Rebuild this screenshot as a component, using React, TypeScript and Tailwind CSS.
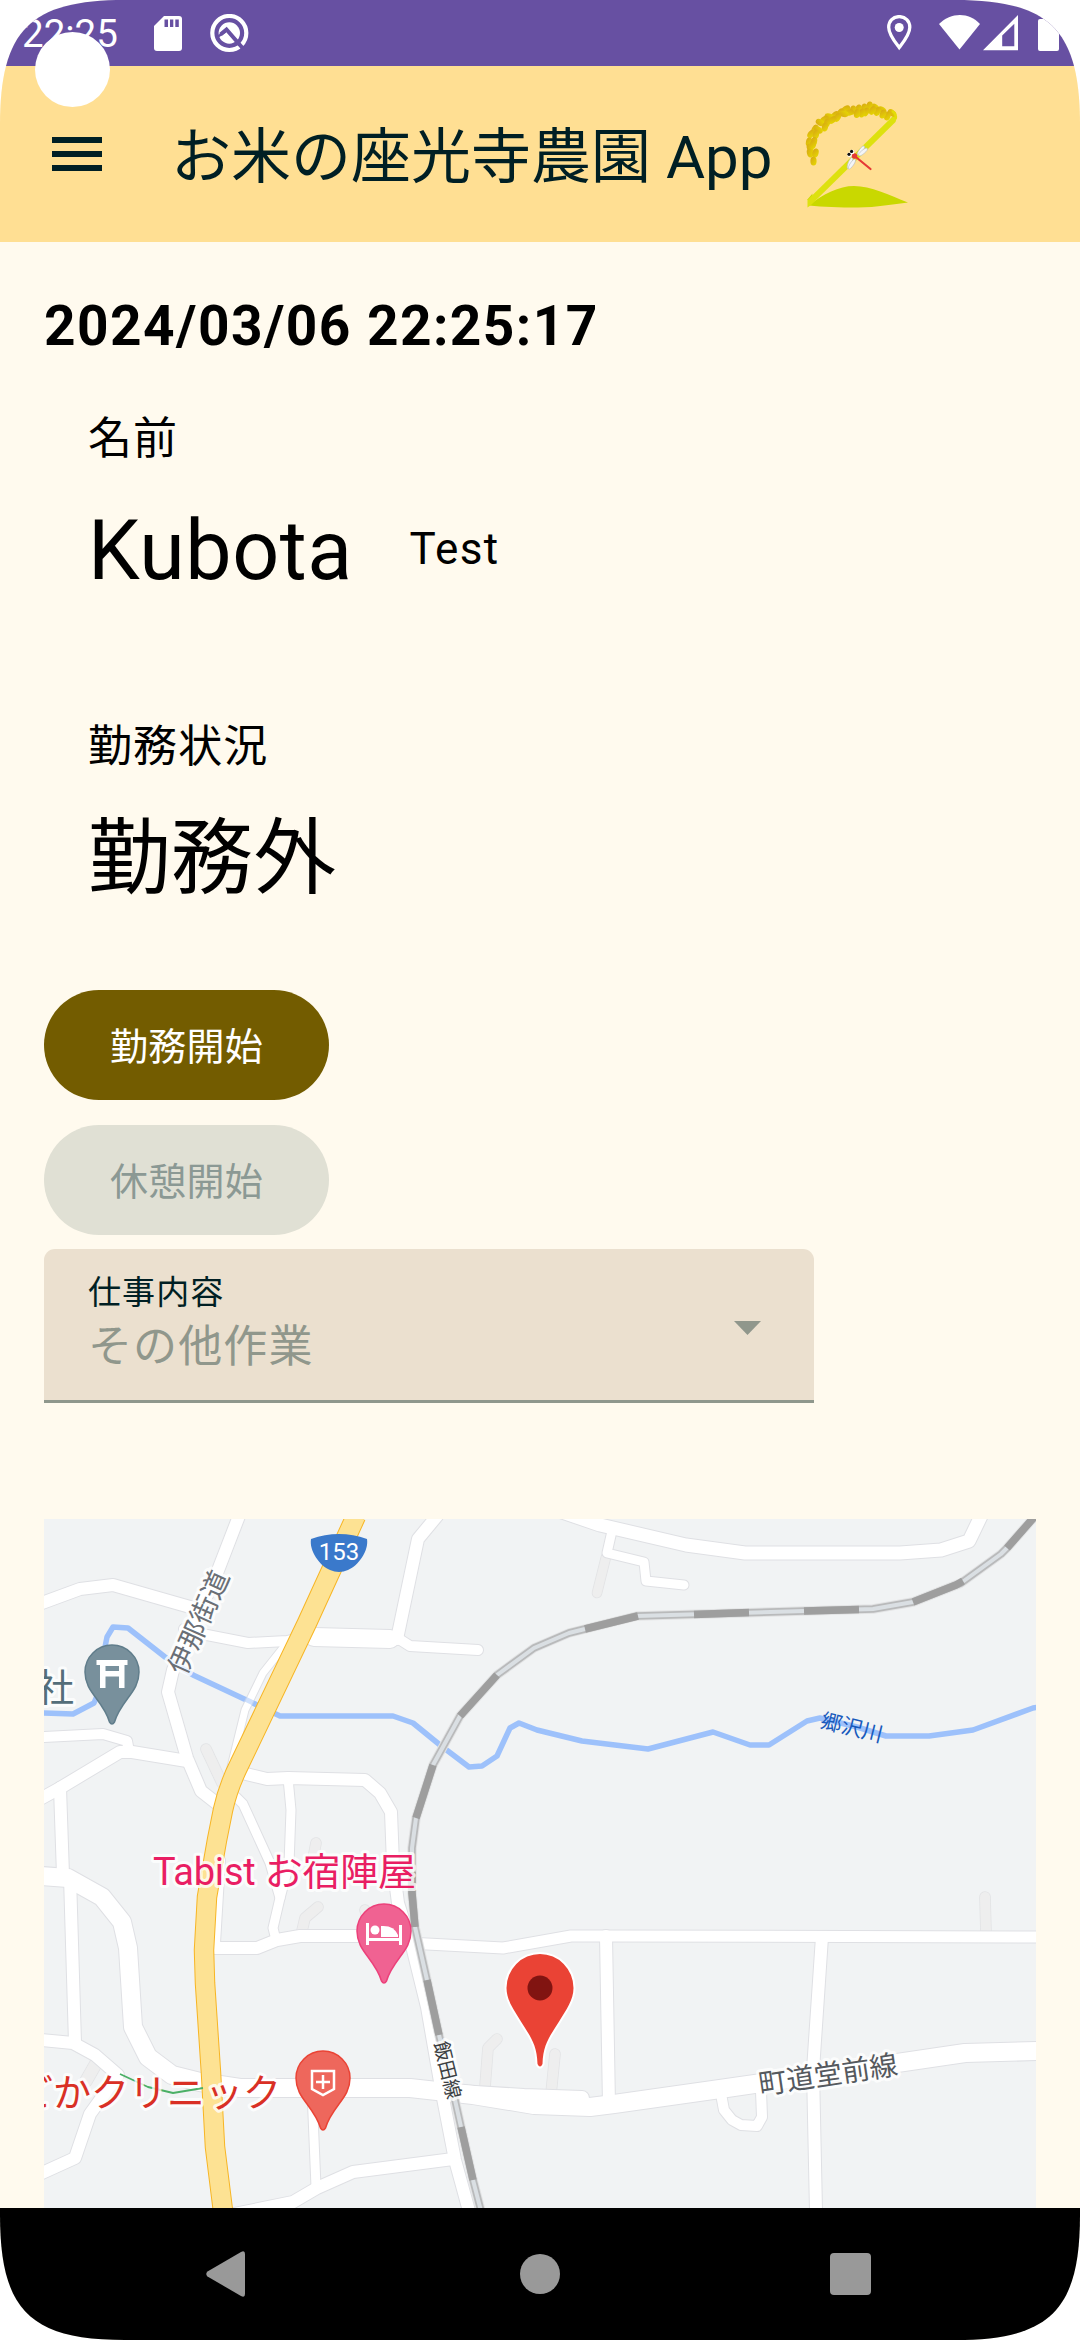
import React from "react";

const FONT = "font-['Roboto','Noto_Sans_CJK_JP',sans-serif]";

function StatusBar() {
  return (
    <div className="flex h-[66px] shrink-0 items-start bg-[#6750a2] text-white">
      <span className="ml-[22px] mt-[13px] w-[98px] text-[38.5px] leading-[42px]">22:25</span>
      <svg className="ml-[34px] mt-4 h-[35px] w-[28px]" viewBox="0 0 28 35">
        <path d="M10 0H25a3 3 0 0 1 3 3V32a3 3 0 0 1-3 3H3a3 3 0 0 1-3-3V10Z" fill="#fff" />
        <path d="M10.500 3.500h3.500v7.500h-3.500zM16 3.500h3.300v7.500H16zM21.300 3.500h3.500v7.500h-3.500z" fill="#6750a2" />
      </svg>
      <svg className="ml-[28px] mt-[14px] h-[39px] w-[39px]" viewBox="0 0 39 39">
        <circle cx="19.300" cy="19" r="17" fill="none" stroke="#fff" strokeWidth="4.200" />
        <circle cx="19.300" cy="19" r="10.700" fill="#fff" />
        <path d="M10.500 20.500L16.500 15.500L33 34.500" fill="none" stroke="#6750a2" strokeWidth="4" />
        <path d="M8 22.500L15.500 17.500" fill="none" stroke="#6750a2" strokeWidth="2.500" />
      </svg>
      <svg className="ml-auto mt-[15px] h-9 w-[25px]" viewBox="0 0 25 36">
        <path d="M12.200 1.600C6 1.600 1.700 6.200 1.700 12.200C1.700 19.500 8 27 12.200 32.500C16.500 27 22.800 19.500 22.800 12.200C22.800 6.200 18.400 1.600 12.200 1.600Z" fill="none" stroke="#fff" strokeWidth="3.300" />
        <circle cx="12.200" cy="12.500" r="4.500" fill="#fff" />
      </svg>
      <svg className="ml-[27px] mt-[15px] h-[35px] w-[42px]" viewBox="0 0 42 35">
        <path d="M0 9C12-3 30-3 41 9L20.500 34.500Z" fill="#fff" />
      </svg>
      <svg className="ml-0.5 mt-[15px] h-9 w-9" viewBox="0 0 36 36">
        <path fillRule="evenodd" d="M0 35.200L35 0V35.200ZM19.200 20.500V31.200H31.300V8.700Z" fill="#fff" />
      </svg>
      <svg className="ml-[19px] mr-[9px] mt-[15px] h-9 w-[33px]" viewBox="0 0 33 36">
        <path d="M0 6a2 2 0 0 1 2-2H21V34a2 2 0 0 1-2 2H2a2 2 0 0 1-2-2Z" fill="#fff" />
      </svg>
    </div>
  );
}

const GRAINS: [number, number, number][] = [
  [91, 17, -55], [86.500, 20, 20], [81, 14, -60], [82, 18, 25], [74.500, 11.500, -50], [76.500, 15.500, 25], [68.500, 10, 10],
  [71.500, 14.500, 30], [63, 12, 20], [65, 16, 30], [57.500, 13, 15], [61, 17, 15], [52, 14, 10], [56, 17.500, 10],
  [45, 13, 60], [48.500, 16.500, 75], [39.500, 16.500, 40], [43, 18, -80], [34, 19, 50], [36.500, 21.500, 30], [28, 20.500, -80],
  [31.500, 24, 50], [23.500, 23.500, 60], [26, 27, 20], [19, 26.500, -60], [24, 31, 15], [14, 33, 30], [17.500, 34, -60],
  [10, 38, 35], [15, 38.500, 15], [8, 46, 10], [13, 45.500, 15], [9, 52, -20], [12, 48.500, 15], [9, 57, -15],
  [14.500, 57, 15], [12.500, 65, 0],
];

function RiceLogo() {
  return (
    <svg className="ml-[29px] h-[116px] w-[112px]" viewBox="0 0 112 116">
      <defs>
        <linearGradient id="grain" x1="0" y1="0" x2="1" y2="1">
          <stop offset="0" stopColor="#d6a514" />
          <stop offset="1" stopColor="#e8dc00" />
        </linearGradient>
      </defs>
      <path d="M8 109.500C22 98 38 90 53 90C70 90 88 99 107 106.500C92 108 76 111.500 57 111.500C38 111.500 22 111 8 109.500Z" fill="#c9d800" />
      <path d="M6 104L11.500 97.500L11 104Z" fill="#c9d800" />
      <path d="M93 19L96 21L94.500 26L10 109L6.500 111.500V104Z" fill="#dde10f" />
      {GRAINS.map(([x, y, a], i) => (
        <ellipse key={i} cx={x} cy={y} rx="3.100" ry="4.600" transform={`rotate(${a} ${x} ${y})`} fill="url(#grain)" />
      ))}
      <path d="M91 15Q96 18 94.500 23" fill="none" stroke="#e3dc08" strokeWidth="2.500" />
      <g fill="#f4f5f6" stroke="#b9bdc2" strokeWidth="0.600">
        <ellipse cx="60" cy="54.500" rx="1.800" ry="5.500" transform="rotate(36 60 54.500)" />
        <ellipse cx="62" cy="56" rx="1.800" ry="5.500" transform="rotate(50 62 56)" />
        <ellipse cx="49" cy="67" rx="1.800" ry="6" transform="rotate(22 49 67)" />
        <ellipse cx="51" cy="68" rx="1.800" ry="6" transform="rotate(34 51 68)" />
      </g>
      <path d="M53 59.500L69.500 73" stroke="#e53935" strokeWidth="2.200" strokeLinecap="round" />
      <circle cx="53.500" cy="60" r="2.700" fill="#e53935" />
      <circle cx="51" cy="56" r="2.300" fill="#fff" />
      <circle cx="48.500" cy="58.800" r="2.300" fill="#fff" />
      <circle cx="50.600" cy="55.400" r="1.600" fill="#111" />
      <circle cx="48" cy="58.300" r="1.600" fill="#111" />
    </svg>
  );
}

function AppBar() {
  return (
    <header className="flex h-[176px] shrink-0 items-center bg-[#ffdf93] text-[#001f24]">
      <svg className="ml-[52px] h-[34px] w-[50px]" viewBox="0 0 50 34">
        <path d="M0 0H50V6H0ZM0 14H50V20H0ZM0 28H50V34H0Z" fill="#001f24" />
      </svg>
      <h1 className="ml-[69px] mt-[7px] whitespace-nowrap text-[60px] leading-[80px]">お米の座光寺農園 App</h1>
      <RiceLogo />
    </header>
  );
}

type Road = { d: string; w: number };

const LANES: Road[] = [
  { d: "M162 230L178 264", w: 10 },
  { d: "M562 38L553 74", w: 9 },
  { d: "M272 324L268 345", w: 10 },
  { d: "M274 388L261 399L258 412", w: 10 },
  { d: "M321 391L324 400", w: 10 },
  { d: "M54 541L42 562", w: 12 },
  { d: "M453 520L444 529L441 568", w: 10 },
  { d: "M511 535L507 575", w: 10 },
  { d: "M941 378L942 414", w: 10 },
];

const ROADS: Road[] = [
  { d: "M195 -3L173 54L129 151L124 173L143 239L157 272L180 290", w: 12 },
  { d: "M-2 84L36 70L69 66L160 92", w: 12 },
  { d: "M140 110L163 116L204 124L243 122L273 118", w: 10 },
  { d: "M270 118L346 120", w: 18 },
  { d: "M340 120L355 120L366 127L434 131", w: 10 },
  { d: "M393 -3L374 20L353 120", w: 12 },
  { d: "M515 -8L556 6L642 26L701 34L856 34L897 31L925 22L938 -5", w: 13 },
  { d: "M568 12L563 34L600 43L602 62L640 66", w: 9 },
  { d: "M246 120L219 154L201 191L185 256", w: 7 },
  { d: "M202 255L223 260L244 259L321 261L336 274L347 293L349 345L354 384L369 431L383 488L398 574L411 641L425 692", w: 12 },
  { d: "M244 259L247 291L245 345L236 379", w: 9 },
  { d: "M192 278L199 285L226 344L236 379L229 409L232 421", w: 9 },
  { d: "M177 341L172 424", w: 8 },
  { d: "M171 429L213 429L233 421L256 417L363 417", w: 12 },
  { d: "M364 424L459 429L527 417L559 417L995 418", w: 11 },
  { d: "M562 417L565 586", w: 12 },
  { d: "M778 418L769 551L772 692", w: 12 },
  { d: "M-2 218L59 215L83 222L85 233", w: 10 },
  { d: "M-2 279L16 269L76 233L88 233L143 242", w: 12 },
  { d: "M16 269L19 356L26 358L31 524", w: 12 },
  { d: "M-2 521L29 524L51 536L74 556L46 595L31 639L-2 654", w: 12 },
  { d: "M-2 357L24 359L58 378L78 403L84 429L89 508L104 538L128 556L156 563L196 569L366 569L429 576L490 586L546 588L570 585L676 570L921 534L995 532", w: 18 },
  { d: "M415 573L480 577L538 579", w: 14 },
  { d: "M268 572L272 668", w: 9 },
  { d: "M190 695L249 683L273 669L309 653L409 640", w: 12 },
  { d: "M677 575L680 591L688 601L697 606L713 607L718 598L717 572", w: 10 },
];

const RIVER =
  "M-2 194L29 195L50 184L58 165L61 128L63 118L69 108L84 109L121 138L149 156L213 186L236 197L349 197L369 204L396 226L425 248L438 247L453 237L466 209L475 204L493 211L538 222L604 230L669 213L706 226L725 226L763 202L776 199L813 208L842 217L885 217L929 211L989 189L995 188";

const RAIL =
  "M992 -4L963 29L957 35L917 64L869 83L829 90L593 97L525 114L490 129L453 156L416 197L389 246L372 299L368 329L368 374L371 408L383 461L395 516L411 581L417 608L429 661L437 692";

const RAIL_DARK =
  "M992 -4L963 29M919 62L912 66L869 83M815 90.500L760 92M705 93.500L650 95.500M594 97L541 110M453 156L416 197M389 246L372 299M368 353L368 374L371 408M383 461L395 516M417 608L429 661";

const HIGHWAY = "M312 -3L263 104L196 244Q184 268 179 291L173 321L163 378L160 431L161 464L167 554L171 628L179 692";

const PIN =
  "M-27 0A27 27 0 0 1 27 0C27 11 22 18 16 26C10 34 5 41 2.500 50Q0 54-2.500 50C-5 41-10 34-16 26C-22 18-27 11-27 0Z";

function MapLabel(props: React.SVGProps<SVGTextElement>) {
  return <text stroke="#ffffff" strokeOpacity="0.800" strokeWidth="6" strokeLinejoin="round" className="[paint-order:stroke]" {...props} />;
}

function FarmMap() {
  return (
    <svg className="mt-[116px] block h-[689px] w-[992px] shrink-0" viewBox="0 0 992 689">
      <rect width="992" height="689" fill="#f1f3f4" />
      <g fill="none" strokeLinejoin="round">
        {LANES.map((r) => (
          <g key={r.d} strokeLinecap="round">
            <path d={r.d} stroke="#e2e3e5" strokeWidth={r.w + 1.6} />
            <path d={r.d} stroke="#eeeeee" strokeWidth={r.w} />
          </g>
        ))}
        <path d={RIVER} stroke="#9dc1fb" strokeWidth="5.500" />
        {ROADS.map((r) => (
          <path key={r.d} d={r.d} stroke="#dfe0e4" strokeWidth={r.w + 2} strokeLinecap="round" />
        ))}
        {ROADS.map((r) => (
          <path key={r.d} d={r.d} stroke="#ffffff" strokeWidth={r.w} strokeLinecap="round" />
        ))}
        <path d="M121 138L149 156M201 180L222 190" stroke="#9dc1fb" strokeWidth="5" opacity="0.500" />
        <path d={HIGHWAY} stroke="#f7b524" strokeWidth="20.500" />
        <path d={HIGHWAY} stroke="#fde293" strokeWidth="18.500" />
        <path d="M76 555L104 568L129 574L159 569" stroke="#4bb066" strokeWidth="1.800" />
        <path d={RAIL} stroke="#e2e3e4" strokeWidth="9.500" />
        <path d={RAIL} stroke="#b9babb" strokeWidth="7.500" />
        <path d={RAIL} stroke="#dadfe3" strokeWidth="4" />
        <path d={RAIL_DARK} stroke="#9e9e9e" strokeWidth="7.500" />
      </g>

      <path d="M267 20Q295 10 323 20C325 32 314 47 304 51Q295 55 286 51C276 47 265 32 267 20Z" fill="#3a79cb" />
      <text x="295" y="41" textAnchor="middle" fontSize="24" fill="#fff">153</text>

      <MapLabel transform="translate(154 103) rotate(-66)" y="10.500" textAnchor="middle" fontSize="27.500" fill="#6a6f76">伊那街道</MapLabel>
      <text transform="translate(808 208) rotate(14)" y="8" textAnchor="middle" fontSize="21" fill="#185abc">郷沢川</text>
      <MapLabel transform="translate(404 551) rotate(76)" y="7.500" textAnchor="middle" fontSize="19.500" fill="#3c4043">飯田線</MapLabel>
      <MapLabel transform="translate(784 555) rotate(-8.500)" y="10.500" textAnchor="middle" fontSize="28" fill="#55595e">町道堂前線</MapLabel>
      <MapLabel x="30" y="182" textAnchor="end" fontSize="38" fill="#546e7a">社</MapLabel>
      <MapLabel x="109" y="366" textLength="263" fontSize="38" fill="#e91e63">Tabist お宿陣屋</MapLabel>
      <MapLabel x="237" y="587" textAnchor="end" fontSize="38" fill="#d93025">どかクリニック</MapLabel>

      <g transform="translate(68 153)">
        <path d={PIN} fill="#78909c" stroke="#607d8b" strokeWidth="1.500" />
        <path d="M-15.500 -12H15.500V-7H12.500V16H7V4.500H-6.500V16H-12V-7H-15.500ZM-6.500 -6V-1H7V-6Z" fill="#fff" fillRule="evenodd" />
      </g>
      <g transform="translate(340 412)">
        <path d={PIN} fill="#f06292" stroke="#ec407a" strokeWidth="1.500" />
        <path d="M-18 -8H-15V7H15V-6H18V14H15V10H-15V14H-18Z" fill="#fff" />
        <circle cx="-9" cy="-1" r="4.500" fill="#fff" />
        <path d="M-3 6V-5Q10 -6 14 4V6Z" fill="#fff" />
      </g>
      <g transform="translate(279 559)">
        <path d={PIN} fill="#ee675c" stroke="#ea4335" strokeWidth="1.500" />
        <path d="M-11 -7H11V11L0 17L-11 11Z" fill="none" stroke="#fff" strokeWidth="2.500" />
        <path d="M0 -3V11M-7 4H7" stroke="#fff" strokeWidth="2.500" />
      </g>
      <g transform="translate(496 469)">
        <path d="M-33.500 0A33.500 34 0 0 1 33.500 0C33.500 12 26 22 20 32C11 47 3 55 2.500 76Q0 81-2.500 76C-3 55-11 47-20 32C-26 22-33.500 12-33.500 0Z" fill="#ea4335" stroke="#fff" strokeWidth="4" className="[paint-order:stroke]" />
        <circle r="12.500" fill="#811411" />
      </g>
    </svg>
  );
}

function NavBar() {
  return (
    <nav className="flex h-[132px] w-full shrink-0 items-center bg-black">
      <svg className="ml-[206px] h-[46px] w-[39px]" viewBox="0 0 39 46">
        <path d="M1.500 20.500L35 1Q39 -1 39 3V43Q39 47 35 45L1.500 25.500Q-1 23 1.500 20.500Z" fill="#999" />
      </svg>
      <div className="ml-[275px] h-10 w-10 rounded-full bg-[#999]" />
      <div className="ml-[270px] h-[42px] w-[41px] rounded-[4px] bg-[#999]" />
    </nav>
  );
}

export default function App() {
  return (
    <div className="h-[2340px] w-[1080px] overflow-hidden bg-white">
      <div
        className={`${FONT} relative flex h-full w-full flex-col bg-[#fffaee] text-black [clip-path:path('M0_125C0_30_30_0_125_0H955C1050_0_1080_30_1080_125V2215C1080_2310_1050_2340_955_2340H125C30_2340_0_2310_0_2215Z')]`}
      >
        <StatusBar />
        <AppBar />
        <div className="absolute left-[35px] top-8 h-[75px] w-[75px] rounded-full bg-white" />
        <main className="flex h-[1966px] shrink-0 flex-col items-start px-11 pt-[52px]">
          <p className="text-[55px] font-bold leading-[64px] tracking-[1.45px]">2024/03/06 22:25:17</p>
          <p className="ml-11 mt-[55px] text-[44px] leading-[52px] tracking-[1.1px]">名前</p>
          <div className="ml-11 mt-[36px] flex items-center">
            <p className="text-[82.5px] leading-[100px] tracking-[0.5px]">Kubota</p>
            <p className="mb-1 ml-[57px] text-[44px] leading-[96px] tracking-[1.375px]">Test</p>
          </div>
          <p className="ml-11 mt-[120px] text-[44px] leading-[52px] tracking-[1.1px]">勤務状況</p>
          <p className="ml-11 mt-[36px] text-[82.5px] leading-[100px] tracking-[0.3px]">勤務外</p>
          <button className="mt-[81px] h-[110px] w-[285px] rounded-full bg-[#735c00] pt-[3px] text-[38px] leading-[44px] tracking-[0.275px] text-white">
            勤務開始
          </button>
          <button className="mt-[25px] h-[110px] w-[285px] rounded-full bg-[#e0e0d4] pt-[3px] text-[38px] leading-[44px] tracking-[0.275px] text-[#8b9994]">
            休憩開始
          </button>
          <div className="mt-[14px] flex h-[154px] w-[770px] items-center justify-between rounded-t-[11px] border-b-[3px] border-[#8f978c] bg-[#ebe0cf] pl-11 pr-[53px]">
            <div className="mb-1 flex flex-col">
              <span className="text-[33px] leading-[44px] tracking-[1.1px] text-[#001f24]">仕事内容</span>
              <span className="mt-1 text-[44px] leading-[56px] tracking-[1.1px] text-[#90978c]">その他作業</span>
            </div>
            <svg className="mt-[6px] h-[14px] w-[27px]" viewBox="0 0 27 14">
              <path d="M0 0H27L13.500 14Z" fill="#90978c" />
            </svg>
          </div>
          <FarmMap />
        </main>
        <NavBar />
      </div>
    </div>
  );
}
